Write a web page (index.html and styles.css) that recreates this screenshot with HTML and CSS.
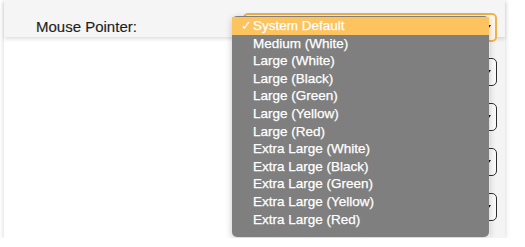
FILE: index.html
```html
<!DOCTYPE html>
<html>
<head>
<meta charset="utf-8">
<link rel="stylesheet" href="styles.css">
</head>
<body>
<div class="panel">
  <div class="row row-head">
    <label class="label">Mouse Pointer:</label>
    <div class="select select-focus">
      <svg class="arrow" width="7" height="5" viewBox="0 0 7 5"><path d="M0 0H7L3.5 5Z" fill="#111"/></svg>
    </div>
  </div>
  <div class="list">
    <div class="row"><div class="select"><svg class="arrow" width="7" height="5" viewBox="0 0 7 5"><path d="M0 0H7L3.5 5Z" fill="#111"/></svg></div></div>
    <div class="row"><div class="select"><svg class="arrow" width="7" height="5" viewBox="0 0 7 5"><path d="M0 0H7L3.5 5Z" fill="#111"/></svg></div></div>
    <div class="row"><div class="select"><svg class="arrow" width="7" height="5" viewBox="0 0 7 5"><path d="M0 0H7L3.5 5Z" fill="#111"/></svg></div></div>
    <div class="row"><div class="select"><svg class="arrow" width="7" height="5" viewBox="0 0 7 5"><path d="M0 0H7L3.5 5Z" fill="#111"/></svg></div></div>
  </div>
  <ul class="menu">
    <li class="item active"><span class="check">✓</span>System Default</li>
    <li class="item"><span class="check"></span>Medium (White)</li>
    <li class="item"><span class="check"></span>Large (White)</li>
    <li class="item"><span class="check"></span>Large (Black)</li>
    <li class="item"><span class="check"></span>Large (Green)</li>
    <li class="item"><span class="check"></span>Large (Yellow)</li>
    <li class="item"><span class="check"></span>Large (Red)</li>
    <li class="item"><span class="check"></span>Extra Large (White)</li>
    <li class="item"><span class="check"></span>Extra Large (Black)</li>
    <li class="item"><span class="check"></span>Extra Large (Green)</li>
    <li class="item"><span class="check"></span>Extra Large (Yellow)</li>
    <li class="item"><span class="check"></span>Extra Large (Red)</li>
  </ul>
</div>
</body>
</html>
```
FILE: styles.css
```css
html, body {
  margin: 0;
  padding: 0;
  background: #ffffff;
  font-family: "Liberation Sans", Arial, sans-serif;
}

.panel {
  position: relative;
  width: 501px;
  height: 238px;
  margin-left: 4px;
  background: #f4f4f4;
  box-shadow: 0 1px 5px rgba(0, 0, 0, 0.18);
  display: flex;
  flex-direction: column;
}

.row {
  display: flex;
  align-items: flex-start;
  height: 45px;
  padding-top: 21px;
  box-sizing: border-box;
}

.row-head {
  position: relative;
  z-index: 2;
  height: 37px;
  padding-top: 0;
  background: #f5f5f5;
  box-shadow: 0 2px 4px rgba(0, 0, 0, 0.13);
}

.label {
  margin: 18px 0 0 32px;
  font-size: 15px;
  line-height: 18px;
  color: #1e1e1e;
  -webkit-text-stroke: 0.15px #1e1e1e;
}

.list {
  position: relative;
  z-index: 1;
  flex: 1;
  margin-right: 15px;
  background: #ffffff;
}

.select {
  position: relative;
  z-index: 3;
  box-sizing: border-box;
  width: 254px;
  height: 28px;
  margin-left: auto;
  margin-right: -7px;
  border: 1px solid #2e2e2e;
  border-radius: 5px;
  background: #fbfbfb;
  display: flex;
  align-items: center;
  justify-content: flex-end;
  padding-right: 5px;
}

.select-focus {
  height: 29px;
  margin-top: 13px;
  margin-right: 8px;
  border: 2px solid #f0b34a;
  background: #fff8ea;
  padding-right: 4px;
}

.arrow {
  display: block;
}

.menu {
  position: absolute;
  z-index: 5;
  left: 228px;
  top: 16px;
  width: 257px;
  height: 221px;
  margin: 0;
  padding: 1px 0 0;
  box-sizing: border-box;
  list-style: none;
  background: #7f7f7f;
  border-radius: 5px;
  box-shadow: 0 2px 7px rgba(0, 0, 0, 0.22);
}

.item {
  display: flex;
  align-items: center;
  height: 17.6px;
  padding-left: 9px;
  font-size: 13.5px;
  line-height: 17.6px;
  color: #ffffff;
  -webkit-text-stroke: 0.25px #ffffff;
  white-space: nowrap;
}

.item.active {
  background: #fcc35e;
}

.check {
  width: 12px;
  font-family: "DejaVu Sans", sans-serif;
  font-size: 13px;
  -webkit-text-stroke: 0;
}
```
